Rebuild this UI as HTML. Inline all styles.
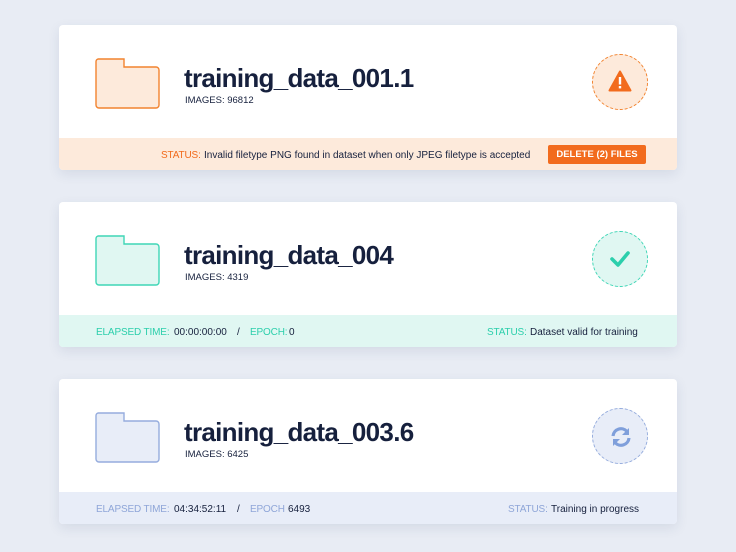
<!DOCTYPE html>
<html><head><style>
body{margin:0;width:736px;height:552px;background:#e8ecf4;font-family:"Liberation Sans",sans-serif;position:relative;overflow:hidden}
.card{position:absolute;left:59px;width:618px;height:145px;background:#fff;border-radius:4px;box-shadow:0 4px 12px rgba(40,60,110,.10);overflow:hidden}
.folder{position:absolute;left:36px;top:33px}
.title{position:absolute;left:125px;top:38px;font-size:26px;font-weight:bold;color:#16203d;letter-spacing:-0.7px}
.img{position:absolute;left:126px;top:70px;font-size:9.5px;color:#16203d}
.circ{position:absolute;left:533px;top:29px;width:56px;height:56px;border-radius:50%;box-sizing:border-box}
.foot{position:absolute;left:0;right:0;bottom:0;height:32px;font-size:10px;color:#16203d;line-height:35px}
.foot span{position:absolute;top:0}
.foot .l{letter-spacing:-0.15px;font-size:10px}
</style></head><body>
<div class="card" style="top:25px">
 <svg class="folder" width="66" height="52" viewBox="0 0 66 52"><path d="M3 1h26v8h32a3 3 0 0 1 3 3v35a3 3 0 0 1-3 3H4a3 3 0 0 1-3-3V4a3 3 0 0 1 2-3z" fill="#fdeadb" stroke="#f2832f" stroke-width="1.4"/></svg>
 <div class="title">training_data_001.1</div>
 <div class="img">IMAGES: 96812</div>
 <div class="circ" style="background:#fdeadb;border:1.5px dashed #f2832f"></div>
 <svg style="position:absolute;left:549px;top:45px" width="24" height="22" viewBox="0 0 24 22"><path d="M12 1.5L22.5 20.5H1.5Z" fill="#f26b1d" stroke="#f26b1d" stroke-width="2" stroke-linejoin="round"/><rect x="10.8" y="7" width="2.4" height="7.5" fill="#fff"/><rect x="10.8" y="16" width="2.4" height="2.4" fill="#fff"/></svg>
 <div class="foot" style="background:#fdeadb">
  <span class="l" style="left:102px;color:#f26b1d">STATUS:</span>
  <span style="left:145px">Invalid filetype PNG found in dataset when only JPEG filetype is accepted</span>
  <span style="left:489px;top:7px;width:98px;height:19px;line-height:19px;background:#f26b1d;color:#fff;font-weight:bold;text-align:center;border-radius:2px;font-size:9.5px">DELETE (2) FILES</span>
 </div>
</div>
<div class="card" style="top:202px">
 <svg class="folder" width="66" height="52" viewBox="0 0 66 52"><path d="M3 1h26v8h32a3 3 0 0 1 3 3v35a3 3 0 0 1-3 3H4a3 3 0 0 1-3-3V4a3 3 0 0 1 2-3z" fill="#e0f7f2" stroke="#3fd6b6" stroke-width="1.4"/></svg>
 <div class="title">training_data_004</div>
 <div class="img">IMAGES: 4319</div>
 <div class="circ" style="background:#e0f7f2;border:1.5px dashed #3fd6b6"></div>
 <svg style="position:absolute;left:551px;top:48px" width="20" height="18" viewBox="0 0 20 18"><path d="M2 9l6 6L18 3" fill="none" stroke="#2ccfac" stroke-width="3.6" stroke-linecap="round" stroke-linejoin="round"/></svg>
 <div class="foot" style="background:#e0f7f2">
  <span class="l" style="left:37px;color:#2ccfac">ELAPSED TIME:</span>
  <span style="left:115px">00:00:00:00</span>
  <span style="left:178px">/</span>
  <span class="l" style="left:191px;color:#2ccfac">EPOCH:</span><span style="left:230px">0</span>
  <span class="l" style="left:428px;color:#2ccfac">STATUS:</span>
  <span style="left:471px">Dataset valid for training</span>
 </div>
</div>
<div class="card" style="top:379px">
 <svg class="folder" width="66" height="52" viewBox="0 0 66 52"><path d="M3 1h26v8h32a3 3 0 0 1 3 3v35a3 3 0 0 1-3 3H4a3 3 0 0 1-3-3V4a3 3 0 0 1 2-3z" fill="#e8edf8" stroke="#95acdd" stroke-width="1.4"/></svg>
 <div class="title">training_data_003.6</div>
 <div class="img">IMAGES: 6425</div>
 <div class="circ" style="background:#e8edf8;border:1.5px dashed #95acdd"></div>
 <svg style="position:absolute;left:550px;top:46px" width="24" height="24" viewBox="0 0 24 24"><path d="M4 11a8 8 0 0 1 14-4.5" fill="none" stroke="#7f9fdb" stroke-width="3.2"/><path d="M20 3v7h-7z" fill="#7f9fdb"/><path d="M20 13a8 8 0 0 1-14 4.5" fill="none" stroke="#7f9fdb" stroke-width="3.2"/><path d="M4 21v-7h7z" fill="#7f9fdb"/></svg>
 <div class="foot" style="background:#e8edf8">
  <span class="l" style="left:37px;color:#8fa6d8">ELAPSED TIME:</span>
  <span style="left:115px">04:34:52:11</span>
  <span style="left:178px">/</span>
  <span class="l" style="left:191px;color:#8fa6d8">EPOCH</span><span style="left:229px">6493</span>
  <span class="l" style="left:449px;color:#8fa6d8">STATUS:</span>
  <span style="left:492px">Training in progress</span>
 </div>
</div>
</body></html>
